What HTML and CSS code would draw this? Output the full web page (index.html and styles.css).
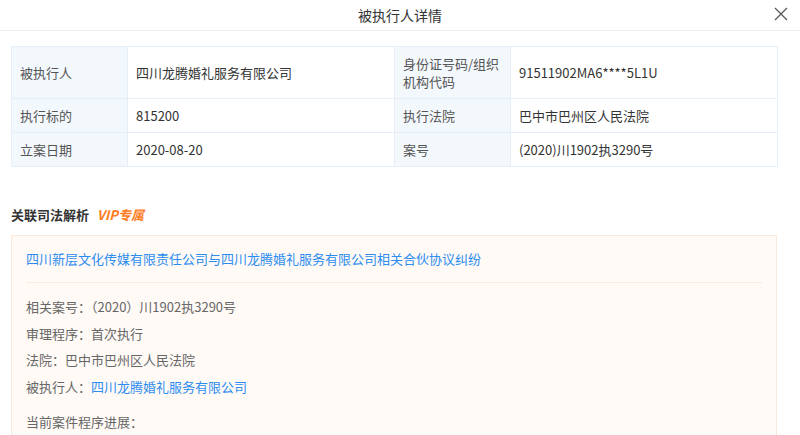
FILE: index.html
```html
<!DOCTYPE html>
<html lang="zh-CN">
<head>
<meta charset="utf-8">
<title>被执行人详情</title>
<link rel="stylesheet" href="styles.css">
</head>
<body>
<div class="dialog">
  <div class="dialog-header">
    <span class="dialog-title">被执行人详情</span>
    <span class="close" aria-label="关闭">
      <svg width="14" height="14" viewBox="0 0 14 14"><path d="M1 1 L13 13 M13 1 L1 13" stroke="#555" stroke-width="1.2" fill="none"/></svg>
    </span>
  </div>
  <div class="dialog-body">
    <table class="info">
      <colgroup>
        <col class="c-label"><col class="c-value"><col class="c-label"><col class="c-value">
      </colgroup>
      <tr class="tall">
        <td class="label">被执行人</td>
        <td>四川龙腾婚礼服务有限公司</td>
        <td class="label">身份证号码/组织机构代码</td>
        <td>91511902MA6****5L1U</td>
      </tr>
      <tr>
        <td class="label">执行标的</td>
        <td>815200</td>
        <td class="label">执行法院</td>
        <td>巴中市巴州区人民法院</td>
      </tr>
      <tr>
        <td class="label">立案日期</td>
        <td>2020-08-20</td>
        <td class="label">案号</td>
        <td>(2020)川1902执3290号</td>
      </tr>
    </table>

    <h3 class="section-title">关联司法解析<span class="vip">VIP专属</span></h3>

    <div class="case-card">
      <div class="case-title"><a href="#">四川新层文化传媒有限责任公司与四川龙腾婚礼服务有限公司相关合伙协议纠纷</a></div>
      <div class="case-info">
        <p>相关案号：（2020）川1902执3290号</p>
        <p>审理程序：首次执行</p>
        <p>法院：巴中市巴州区人民法院</p>
        <p>被执行人：<a href="#">四川龙腾婚礼服务有限公司</a></p>
      </div>
      <div class="progress">
        <p class="progress-title">当前案件程序进展：</p>
        <div class="timeline"></div>
      </div>
    </div>
  </div>
</div>
</body>
</html>
```

FILE: styles.css
```css
html, body {
  margin: 0;
  padding: 0;
  background: #fff;
}
body {
  font-family: "Noto Sans CJK SC", "Noto Sans", sans-serif;
  font-size: 13px;
  color: #333;
}
.dialog {
  width: 800px;
  height: 435px;
  display: flex;
  flex-direction: column;
  overflow: hidden;
}
.dialog-header {
  flex: none;
  height: 30px;
  border-bottom: 1px solid #eceff3;
  position: relative;
  display: flex;
  align-items: center;
  justify-content: center;
}
.dialog-title {
  font-size: 14px;
  color: #333;
  line-height: 28px;
}
.close {
  position: absolute;
  right: 12px;
  top: 7px;
  width: 14px;
  height: 14px;
  display: block;
}
.close svg { display: block; }
.dialog-body {
  flex: 1;
  overflow-y: scroll;
  padding: 15px 16px 20px 11px;
}
.dialog-body::-webkit-scrollbar {
  width: 8px;
}
.dialog-body::-webkit-scrollbar-track {
  background: #f1f1f1;
}
.dialog-body::-webkit-scrollbar-thumb {
  background: #c1c1c1;
  border-left: 2px solid #f1f1f1;
  border-right: 1px solid #f1f1f1;
  border-top: 2px solid #f1f1f1;
}
.info {
  width: 765px;
  border-collapse: collapse;
  table-layout: fixed;
}
.c-label { width: 116px; }
.c-value { width: 267px; }
.info td {
  border: 1px solid #e6eef7;
  padding: 0 8px;
  height: 33px;
  line-height: 18px;
  color: #333;
}
.info tr.tall td { height: 51px; }
.info td.label {
  background: #f3f8fd;
  color: #555;
}
.section-title {
  margin: 38px 0 10px;
  font-size: 13px;
  font-weight: bold;
  line-height: 20px;
  color: #333;
}
.vip {
  color: #ff7a1a;
  font-style: italic;
  margin-left: 8px;
}
.case-card {
  width: 766px;
  box-sizing: border-box;
  background: #fffaf6;
  border: 1px solid #fbe8d8;
  padding: 0 14px 10px;
}
.case-title {
  padding: 13px 0 13px;
  line-height: 20px;
  border-bottom: 1px solid #f7ece3;
}
a {
  color: #2c8cf0;
  text-decoration: none;
}
.case-info {
  padding-top: 11px;
}
.case-info p, .progress p {
  margin: 0;
  line-height: 26.7px;
  color: #666;
}
.progress {
  margin-top: 11px;
}
.progress p.progress-title {
  line-height: 20px;
}
.timeline {
  height: 40px;
}
```
